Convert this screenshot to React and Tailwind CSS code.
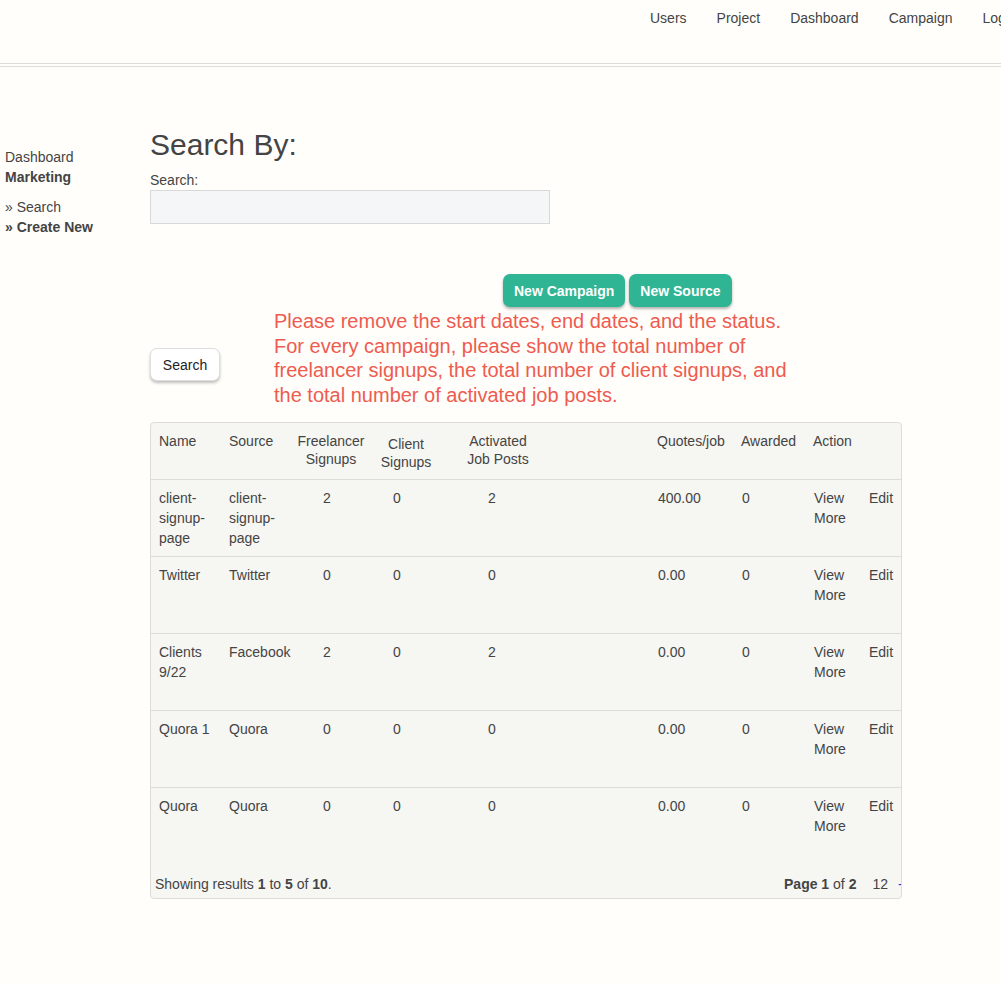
import React from 'react';

// campaign rows shown on the first page
const ROWS = [
  { name: 'client-signup-page', source: 'client-signup-page', free: 2, client: 0, jobs: 2, quotes: '400.00', awarded: 0 },
  { name: 'Twitter', source: 'Twitter', free: 0, client: 0, jobs: 0, quotes: '0.00', awarded: 0 },
  { name: 'Clients 9/22', source: 'Facebook', free: 2, client: 0, jobs: 2, quotes: '0.00', awarded: 0 },
  { name: 'Quora 1', source: 'Quora', free: 0, client: 0, jobs: 0, quotes: '0.00', awarded: 0 },
  { name: 'Quora', source: 'Quora', free: 0, client: 0, jobs: 0, quotes: '0.00', awarded: 0 },
];

const NAV = ['Users', 'Project', 'Dashboard', 'Campaign', 'Logout'];

const GRID = 'grid grid-cols-[70px_69px_82px_68px_116px_93px_84px_72px_55px_41px]';

const App = () => {
  return (
    <div className="min-h-screen w-[1001px] overflow-hidden bg-[#fffefb] text-[14px] leading-[20px] text-[#444] font-['Liberation_Sans',Arial,sans-serif]">
      {/* --- TOP NAV --- */}
      <header className="h-[64px] border-b border-[#dcdcd8]">
        <nav className="flex whitespace-nowrap pl-[635px] pt-[8px]">
          {NAV.map((item) => (
            <a key={item} className="px-[15px] text-[#444]">{item}</a>
          ))}
        </nav>
      </header>
      <div className="mt-[2px] border-t border-[#dcdcd8]" />

      <div className="flex">
        {/* --- SIDEBAR --- */}
        <aside className="w-[150px] shrink-0 pl-[5px] pt-[80px]">
          <div>Dashboard</div>
          <div className="font-bold">Marketing</div>
          <div className="mt-[10px]">» Search</div>
          <div className="font-bold">» Create New</div>
        </aside>

        {/* --- MAIN --- */}
        <main className="w-[752px] pt-[60px]">
          <h1 className="text-[30px] leading-[35px] text-[#444]">Search By:</h1>
          <label className="mt-[8px] block">Search:</label>
          <input className="block h-[34px] w-[400px] border border-[#d8d8d8] bg-[#f5f6f7] outline-none" />

          <div className="mt-[50px] flex gap-[4px] pl-[353px]">
            <button className="h-[33px] rounded-[7px] bg-[#2fb593] px-[11px] font-bold text-white shadow-[0_2px_3px_rgba(0,0,0,0.3)]">New Campaign</button>
            <button className="h-[33px] rounded-[7px] bg-[#2fb593] px-[11px] font-bold text-white shadow-[0_2px_3px_rgba(0,0,0,0.3)]">New Source</button>
          </div>

          <div className="mt-[2px] flex">
            <button className="mt-[39px] h-[33px] w-[70px] self-start rounded-[7px] border border-[#dedede] bg-white text-[#222] shadow-[0_2px_3px_rgba(0,0,0,0.25)]">Search</button>
            <p className="ml-[54px] whitespace-nowrap text-[20px] leading-[24.7px] text-[#ee5b4f]">
              Please remove the start dates, end dates, and the status.<br />
              For every campaign, please show the total number of<br />
              freelancer signups, the total number of client signups, and<br />
              the total number of activated job posts.
            </p>
          </div>

          {/* --- TABLE --- */}
          <div className="mt-[14px] overflow-hidden rounded-[4px] border border-[#dcdcd8] bg-[#f6f6f3]">
            <div className={`${GRID} h-[57px] border-b border-[#dcdcd8] leading-[18px]`}>
              <div className="pl-[8px] pt-[9px]">Name</div>
              <div className="pl-[8px] pt-[9px]">Source</div>
              <div className="pt-[9px] text-center">Freelancer<br />Signups</div>
              <div className="pt-[12px] text-center">Client<br />Signups</div>
              <div className="pt-[9px] text-center">Activated<br />Job Posts</div>
              <div />
              <div className="pl-[8px] pt-[9px]">Quotes/job</div>
              <div className="pl-[8px] pt-[9px]">Awarded</div>
              <div className="col-span-2 pl-[8px] pt-[9px]">Action</div>
            </div>

            {ROWS.map((row, i) => (
              <div key={i} className={`${GRID} h-[77px] ${i < ROWS.length - 1 ? 'border-b border-[#dcdcd8]' : ''}`}>
                <div className="pl-[8px] pr-[8px] pt-[8px]">{row.name}</div>
                <div className="pl-[8px] pt-[8px]">{row.source}</div>
                <div className="pl-[33px] pt-[8px]">{row.free}</div>
                <div className="pl-[21px] pt-[8px]">{row.client}</div>
                <div className="pl-[48px] pt-[8px]">{row.jobs}</div>
                <div />
                <div className="pl-[9px] pt-[8px]">{row.quotes}</div>
                <div className="pl-[9px] pt-[8px]">{row.awarded}</div>
                <div className="pl-[9px] pt-[8px]">View More</div>
                <div className="pl-[9px] pt-[8px]">Edit</div>
              </div>
            ))}

            <div className="flex h-[33px] items-start whitespace-nowrap pl-[4px] pt-[9px]">
              <span>Showing results <b>1</b> to <b>5</b> of <b>10</b>.</span>
              <span className="ml-auto flex">
                <span><b>Page 1</b> of <b>2</b></span>
                <span className="ml-[16px]">12</span>
                <span className="ml-[10px] inline-block w-[3px] overflow-hidden text-[#1a3fd6]">-</span>
              </span>
            </div>
          </div>
        </main>
      </div>
    </div>
  );
};

export default App;
